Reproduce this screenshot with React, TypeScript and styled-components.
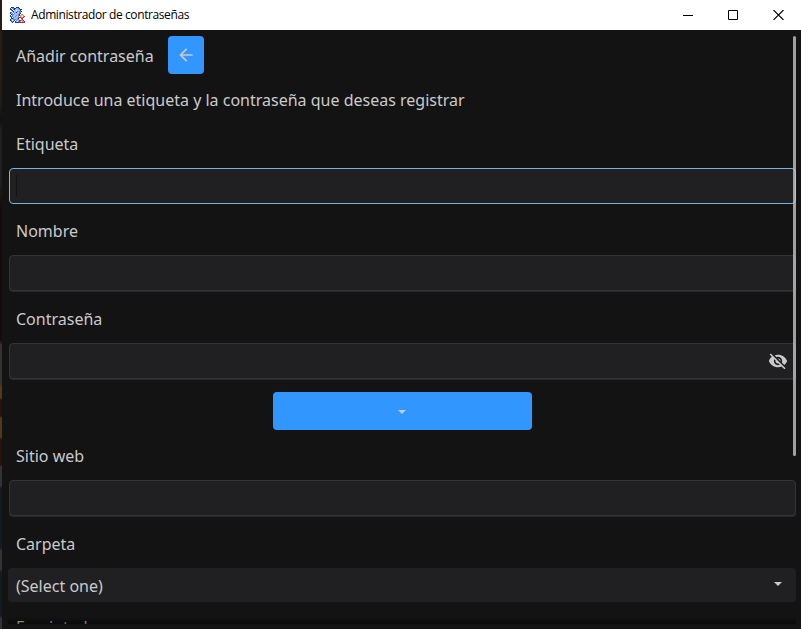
import React from "react";
import styled, { createGlobalStyle } from "styled-components";

const Global = createGlobalStyle`
  * { box-sizing: border-box; }
  body { margin: 0; overflow: hidden; background: #131313; }
`;

const Desktop = styled.div`
  width: 801px;
  height: 629px;
  padding-left: 2px;
  overflow: hidden;
  background: linear-gradient(#2a1b12 0 60px, #231c16 100px, #101114 120px, #202020 130px 180px, #180a0a 210px 340px, #35332f 345px 384px, #553816 386px 398px, #2b100a 400px 416px, #553816 418px 437px, #2b100a 440px 465px, #35332f 467px 486px, #121a22 488px 548px, #35332f 550px 570px, #121a22 572px 616px, #35332f 618px);
`;

const Window = styled.div`
  position: relative;
  display: flex;
  flex-direction: column;
  height: 629px;
  background: #131313;
  color: #cacaca;
  font: 16px/24px "Noto Sans", sans-serif;
`;

const TitleBar = styled.header`
  display: flex;
  align-items: center;
  height: 30px;
  padding: 0 17px 0 8px;
  background: #fff;
  color: #000;
`;

const Title = styled.span`
  flex: 1;
  margin-left: 5px;
  font: 12px/16px "Open Sans", sans-serif;
  letter-spacing: -0.4px;
`;

const Controls = styled.div`
  display: flex;
  gap: 34px;
  margin-top: -1px;
`;

const Content = styled.main`
  display: flex;
  flex-direction: column;
  height: 594px;
  padding: 6px 5px 0 7px;
  overflow: hidden;
`;

const Heading = styled.div`
  display: flex;
  align-items: center;
  gap: 14px;
  height: 38px;
  padding-left: 7px;
`;

const HeadingText = styled.h1`
  margin: 2px 0 0;
  font: inherit;
`;

const Label = styled.label<{ $top: number }>`
  flex: none;
  height: 24px;
  margin: ${(p) => p.$top}px 0 12px;
  padding-left: 7px;
`;

const Button = styled.button<{ $width: number; $height: number }>`
  display: flex;
  flex: none;
  align-items: center;
  justify-content: center;
  width: ${(p) => p.$width}px;
  height: ${(p) => p.$height}px;
  padding: 0;
  border: 0;
  border-radius: 4px;
  background: #3296ff;
  color: #cacaca;
`;

const MenuButton = styled(Button)`
  padding: 1px 1px 0 0;
`;

const Field = styled.div<{ $focused?: boolean }>`
  display: flex;
  flex: none;
  align-items: center;
  justify-content: flex-end;
  height: 36px;
  margin-bottom: ${(p) => (p.$focused ? 0 : 1)}px;
  padding: 0 7px 0 6px;
  border: 1px solid ${(p) => (p.$focused ? "#73b5df" : "#343436")};
  border-radius: 4px;
  background: #202023;
  box-shadow: ${(p) => (p.$focused ? "none" : "0 1px #28282a")};
`;

const Caret = styled.i`
  width: 1px;
  height: 22px;
  margin-right: auto;
  background: #131313;
`;

const Center = styled.div`
  display: flex;
  justify-content: center;
  margin-top: 12px;
`;

const Select = styled.div`
  display: flex;
  flex: none;
  align-items: center;
  justify-content: space-between;
  height: 34px;
  margin-left: -1px;
  padding: 1px 14px 0 8px;
  border-radius: 4px;
  background: #202023;
`;

const SelectIcon = styled.span`
  display: flex;
  margin-top: -3px;
`;

const ScrollThumb = styled.div`
  position: absolute;
  top: 36px;
  right: 5px;
  width: 3px;
  height: 420px;
  border-radius: 2px;
  background: rgba(200, 200, 200, 0.78);
`;

const BottomShade = styled.div`
  position: absolute;
  left: 6px;
  right: 5px;
  bottom: 5px;
  height: 7px;
  background: linear-gradient(transparent, rgba(0, 0, 0, 0.5));
`;

const icon = [
  ".DDD..DDD.......",
  "D.BBDDLLBD......",
  "DD.BDLLLLBDD....",
  ".BD.LLWLLLD.....",
  "..BDLLLBLBBD....",
  "DB.BLLDLLBB.....",
  "DLB.BLLLLBD.....",
  ".DBBLLLLBD.OO...",
  "D.BLLLBLBDOYYO..",
  "DBBLLBLLB.OYWOR.",
  ".D.BLLLLBDROOR..",
  ".DDBLLLBD..RR...",
  "DLLBBBLBB..PR...",
  "DBWLD.BLLDRPPR..",
  ".DBD.DLWBRPWPPR.",
  "..D..DDDDRRRRRR.",
];
const palette: Record<string, string> = {
  D: "#173b80",
  B: "#5f86da",
  L: "#9dbbf4",
  W: "#ffffff",
  O: "#f08a28",
  R: "#a83440",
  Y: "#ffcf60",
  P: "#f07898",
};

const AppIcon = () => (
  <svg width="16" height="16" viewBox="0 0 16 16" shapeRendering="crispEdges">
    {icon.flatMap((row, y) =>
      [...row].map((c, x) => c === "." ? null : <rect key={`${x}-${y}`} x={x} y={y} width="1" height="1" fill={palette[c]} />)
    )}
  </svg>
);

const DownArrow = () => (
  <svg width="8" height="4" viewBox="0 0 8 4"><path d="M0 0h8L4 4z" fill="#cacaca" /></svg>
);

export default function App() {
  return (
    <Desktop>
      <Global />
      <Window>
        <TitleBar>
          <AppIcon />
          <Title>Administrador de contraseñas</Title>
          <Controls>
            <svg width="11" height="10"><path d="M0 5.5h10" stroke="#000" /></svg>
            <svg width="11" height="10"><path d="M.5 .5h9v9h-9z" fill="none" stroke="#000" /></svg>
            <svg width="11" height="10"><path d="M.5 0l10 10M10.5 0l-10 10" stroke="#000" strokeWidth="1.1" /></svg>
          </Controls>
        </TitleBar>
        <Content>
          <Heading>
            <HeadingText>Añadir contraseña</HeadingText>
            <Button $width={36} $height={38} aria-label="Volver">
              <svg width="20" height="20" viewBox="0 0 24 24"><path d="M20 11H7.83l5.59-5.59L12 4l-8 8 8 8 1.41-1.41L7.83 13H20z" fill="#cacaca" /></svg>
            </Button>
          </Heading>
          <Label as="p" $top={14}>Introduce una etiqueta y la contraseña que deseas registrar</Label>
          <Label $top={8}>Etiqueta</Label>
          <Field $focused><Caret /></Field>
          <Label $top={15}>Nombre</Label>
          <Field />
          <Label $top={15}>Contraseña</Label>
          <Field>
            <svg width="20" height="20" viewBox="0 0 24 24"><path fill="#cacaca" d="M12 7c2.76 0 5 2.24 5 5 0 .65-.13 1.26-.36 1.83l2.92 2.92c1.51-1.26 2.7-2.89 3.43-4.75-1.73-4.39-6-7.5-11-7.5-1.4 0-2.74.25-3.98.7l2.16 2.16C10.74 7.13 11.35 7 12 7zM2 4.27l2.28 2.28.46.46C3.08 8.3 1.78 10.02 1 12c1.73 4.39 6 7.5 11 7.5 1.55 0 3.03-.3 4.38-.84l.42.42L19.73 22 21 20.73 3.27 3 2 4.27zM7.53 9.8l1.55 1.55c-.05.21-.08.43-.08.65 0 1.66 1.34 3 3 3 .22 0 .44-.03.65-.08l1.55 1.55c-.67.33-1.41.53-2.2.53-2.76 0-5-2.24-5-5 0-.79.2-1.53.53-2.2zm4.31-.78l3.15 3.15.02-.16c0-1.66-1.34-3-3-3l-.17.01z" /></svg>
          </Field>
          <Center><MenuButton $width={259} $height={38} aria-label="Opciones"><DownArrow /></MenuButton></Center>
          <Label $top={14}>Sitio web</Label>
          <Field />
          <Label $top={15}>Carpeta</Label>
          <Select><span>(Select one)</span><SelectIcon><DownArrow /></SelectIcon></Select>
          <Label $top={13}>Encriptado</Label>
        </Content>
        <ScrollThumb />
        <BottomShade />
      </Window>
    </Desktop>
  );
}
